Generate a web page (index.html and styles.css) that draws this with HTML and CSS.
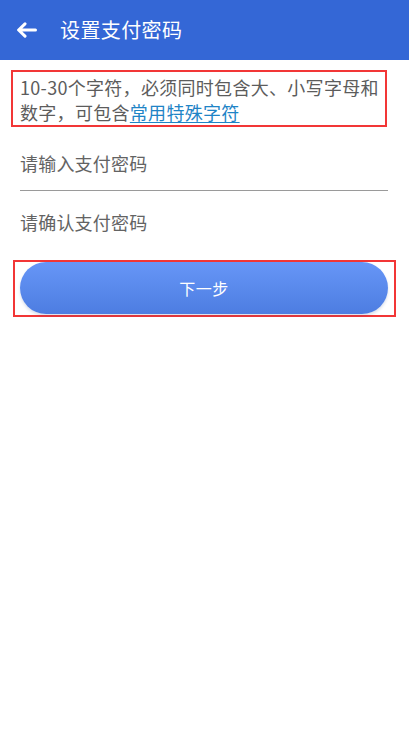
FILE: index.html
```html
<!DOCTYPE html>
<html lang="zh-CN">
<head>
<meta charset="utf-8">
<meta name="viewport" content="width=device-width, initial-scale=1">
<title>设置支付密码</title>
<link rel="stylesheet" href="styles.css">
</head>
<body>
<header class="appbar">
  <button class="back" aria-label="返回">
    <svg width="22" height="16" viewBox="0 0 22 16" aria-hidden="true">
      <path d="M19.5 8H3M9 1.8L2.6 8L9 14.2" fill="none" stroke="#fff" stroke-width="3" stroke-linecap="round" stroke-linejoin="round"/>
    </svg>
  </button>
  <h1 class="title">设置支付密码</h1>
</header>

<main class="content">
  <p class="hint">10-30个字符，必须同时包含大、小写字母和数字，可包含<a class="hint-link" href="#">常用特殊字符</a></p>

  <div class="field field-first">
    <input class="field-input" type="password" placeholder="请输入支付密码">
  </div>
  <div class="field field-second">
    <input class="field-input" type="password" placeholder="请确认支付密码">
  </div>

  <div class="submit-box">
    <button class="submit" type="button">下一步</button>
  </div>
</main>
</body>
</html>
```

FILE: styles.css
```css
* {
  box-sizing: border-box;
}

html, body {
  margin: 0;
  padding: 0;
  background: #ffffff;
}

body {
  font-family: "Noto Sans CJK SC", "Noto Sans", sans-serif;
  color: #555555;
}

.appbar {
  height: 60px;
  background: #3467d6;
  display: flex;
  align-items: center;
}

.back {
  width: 60px;
  height: 60px;
  padding: 0 0 0 16px;
  margin: 0;
  border: 0;
  background: transparent;
  display: flex;
  align-items: center;
  justify-content: flex-start;
}

.back svg {
  display: block;
}

.title {
  margin: 0;
  font-size: 20px;
  font-weight: 400;
  color: #ffffff;
  line-height: 60px;
  letter-spacing: 0.4px;
}

.content {
  display: flex;
  flex-direction: column;
}

.hint {
  margin: 10px 0 0 11px;
  width: 376px;
  border: 2px solid #f23636;
  padding: 3px 2px 0 7px;
  font-size: 18px;
  line-height: 25px;
  letter-spacing: 0.3px;
  color: #5c5c5c;
}

.hint-link {
  color: #1f84c6;
  text-decoration: underline;
  text-underline-offset: 2px;
}

.field {
  margin: 0 21px 0 20px;
  display: flex;
}

.field-first {
  margin-top: 8px;
  height: 56px;
  border-bottom: 1px solid #9a9a9a;
}

.field-second {
  height: 61px;
  margin-bottom: 8px;
}

.field-input {
  width: 100%;
  height: 100%;
  border: 0;
  padding: 0;
  margin: 0;
  outline: none;
  background: transparent;
  font-family: "Noto Sans CJK SC", "Noto Sans", sans-serif;
  font-size: 18px;
  letter-spacing: 0.2px;
  color: #333333;
}

.field-input::placeholder {
  color: #636363;
  opacity: 1;
}

.submit-box {
  margin: 0 13px;
  border: 2px solid #f23636;
  padding: 0 6px 1px 5px;
}

.submit {
  display: block;
  width: 100%;
  height: 52px;
  border: 0;
  border-radius: 26px;
  background: linear-gradient(180deg, #6796f7 0%, #4d7de1 100%);
  box-shadow: 0 2px 3px rgba(40, 70, 140, 0.18);
  color: #ffffff;
  font-family: "Noto Sans CJK SC", "Noto Sans", sans-serif;
  font-size: 16px;
  letter-spacing: 0.5px;
}
```
